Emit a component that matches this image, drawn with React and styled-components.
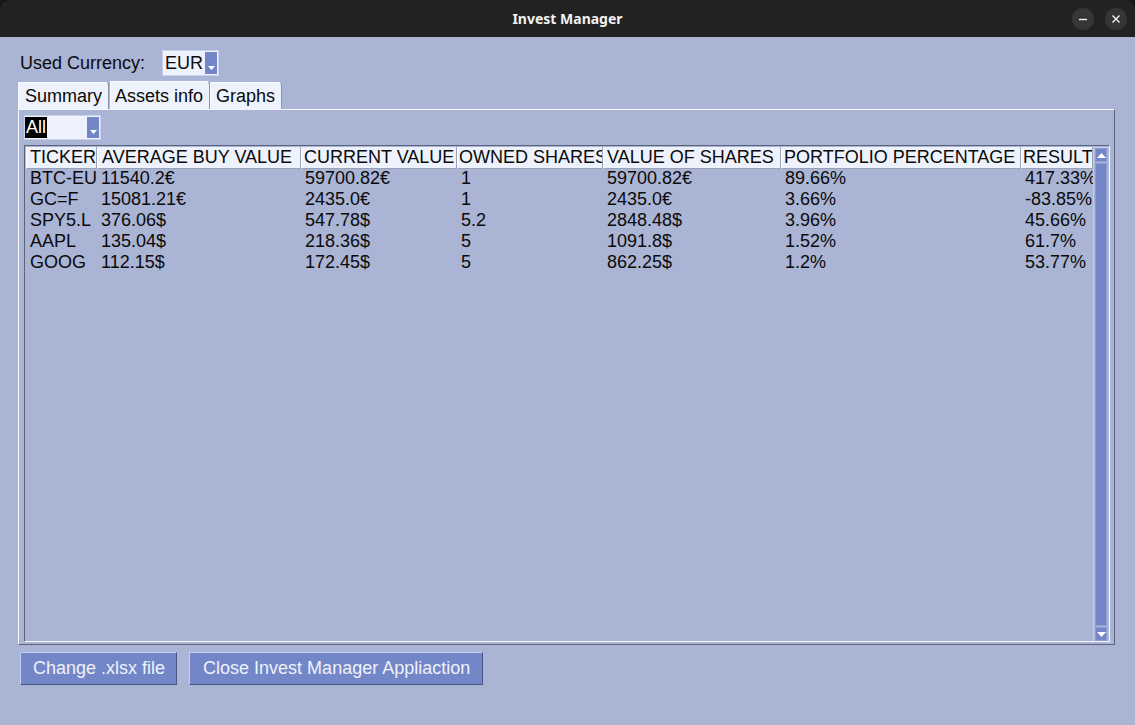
import styled, { createGlobalStyle } from 'styled-components';

const GlobalStyle = createGlobalStyle`
  html, body {
    margin: 0;
    padding: 0;
    background: #161616;
  }
  * {
    box-sizing: border-box;
  }
`;

const colors = {
  bg: '#aab4d4',
  light: '#eef2fc',
  accent: '#7386c7',
  dark: '#5b6478',
  text: '#0a0a0a',
};

const Window = styled.div`
  width: 1135px;
  height: 725px;
  display: flex;
  flex-direction: column;
  font-family: 'Liberation Sans', Arial, sans-serif;
  font-size: 18px;
  color: ${colors.text};
`;

const TitleBar = styled.div`
  height: 37px;
  background: #222222;
  border-radius: 10px 10px 0 0;
  display: grid;
  grid-template-columns: 1fr auto 1fr;
  align-items: center;
`;

const Title = styled.div`
  grid-column: 2;
  color: #f2f2f2;
  font-family: 'Noto Sans', 'DejaVu Sans', sans-serif;
  font-weight: 700;
  font-size: 14px;
`;

const Controls = styled.div`
  grid-column: 3;
  justify-self: end;
  display: flex;
  gap: 11px;
  margin-right: 8px;
`;

const CircleButton = styled.div`
  width: 22px;
  height: 22px;
  border-radius: 50%;
  background: #363636;
  display: flex;
  align-items: center;
  justify-content: center;
`;

const Body = styled.div`
  flex: 1;
  background: ${colors.bg};
  padding: 13px 21px 0 18px;
  display: flex;
  flex-direction: column;
`;

const CurrencyRow = styled.div`
  display: flex;
  align-items: center;
  gap: 17px;
  margin-left: 2px;
  height: 26px;
`;

const Combo = styled.div`
  width: ${({ width }) => width}px;
  height: ${({ height }) => height}px;
  background: ${colors.light};
  border: 1px solid #c9d0ea;
  display: flex;
  align-items: center;
  justify-content: space-between;
  padding: 1px 1px 1px ${({ pad }) => pad}px;
`;

const ComboText = styled.span`
  line-height: 21px;
  height: 21px;
  padding: 0 ${({ selected }) => (selected ? '1px' : '0')};
  background: ${({ selected }) => (selected ? '#000' : 'transparent')};
  color: ${({ selected }) => (selected ? '#fff' : colors.text)};
`;

const ArrowButton = styled.div`
  width: 12px;
  height: 100%;
  background: ${colors.accent};
  display: flex;
  align-items: flex-end;
  justify-content: center;
  padding-bottom: 4px;
`;

const TabRow = styled.div`
  display: flex;
  margin-top: 5px;
  height: 28px;
  align-items: flex-end;
`;

const Tab = styled.div`
  height: ${({ active }) => (active ? 28 : 27)}px;
  padding: 0 6px 0 ${({ pad }) => pad}px;
  margin-right: ${({ gap }) => gap}px;
  background: ${colors.light};
  border-top: 1px solid #f8faff;
  border-left: 1px solid #f8faff;
  border-right: 1px solid #8d94a8;
  border-radius: 0 4px 0 0;
  display: flex;
  align-items: center;
  line-height: 1;
`;

const Pane = styled.div`
  width: 1097px;
  height: 536px;
  border-top: 1px solid #f4f7ff;
  border-left: 1px solid #f4f7ff;
  border-bottom: 1px solid ${colors.dark};
  border-right: 1px solid ${colors.dark};
  padding: 5px 4px 2px 5px;
  display: flex;
  flex-direction: column;
  gap: 5px;
`;

const Tree = styled.div`
  flex: 1;
  display: flex;
  border-top: 1px solid ${colors.dark};
  border-left: 1px solid ${colors.dark};
  border-bottom: 1px solid #f4f7ff;
  border-right: 1px solid #f4f7ff;
  padding: 1px 0 0 1px;
`;

const Table = styled.div`
  display: grid;
  grid-template-columns: ${({ cols }) => cols.map(c => `${c}px`).join(' ')};
  grid-auto-rows: 21px;
  align-content: start;
`;

const HeadCell = styled.div`
  height: 22px;
  background: ${colors.light};
  border-left: 1px solid #ffffff;
  border-right: 1px solid #9ba1b4;
  border-bottom: 1px solid #9ba1b4;
  padding-left: ${({ pad }) => pad}px;
  line-height: 21px;
  white-space: nowrap;
  overflow: hidden;
`;

const Cell = styled.div`
  padding-left: 4px;
  line-height: 21px;
  white-space: nowrap;
  overflow: hidden;
`;

const Scrollbar = styled.div`
  width: 15px;
  border-left: 1px solid #c6cdea;
  border-top: 1px solid #c6cdea;
  display: flex;
  flex-direction: column;
  padding: 0 1px 0 1px;
  gap: 1px;
`;

const ScrollArrow = styled.div`
  height: 14px;
  background: ${colors.accent};
  border: 1px solid #8e9cd2;
  display: flex;
  align-items: center;
  justify-content: center;
`;

const Thumb = styled.div`
  flex: 1;
  background: ${colors.accent};
  border: 1px solid #8e9cd2;
`;

const ButtonRow = styled.div`
  display: flex;
  gap: 12px;
  margin-top: 7px;
  margin-left: 2px;
`;

const Button = styled.div`
  height: 33px;
  padding: 0 ${({ padR }) => padR}px 0 ${({ padL }) => padL}px;
  background: ${colors.accent};
  color: ${colors.light};
  border-top: 1px solid #c3cdf6;
  border-left: 1px solid #c3cdf6;
  border-bottom: 1px solid #48557f;
  border-right: 1px solid #48557f;
  display: flex;
  align-items: center;
`;

const Triangle = ({ up }) => (
  <svg width="9" height="5" viewBox="0 0 9 5">
    <path d={up ? 'M0 5 L4.5 0 L9 5 Z' : 'M0 0 L4.5 5 L9 0 Z'} fill="#ffffff" />
  </svg>
);

const SmallDown = () => (
  <svg width="7" height="4" viewBox="0 0 7 4">
    <path d="M0 0 L3.5 4 L7 0 Z" fill="#ffffff" />
  </svg>
);

const columns = [
  { title: 'TICKER', width: 71, pad: 3 },
  { title: 'AVERAGE BUY VALUE', width: 204, pad: 4 },
  { title: 'CURRENT VALUE', width: 156, pad: 2 },
  { title: 'OWNED SHARES', width: 146, pad: 1 },
  { title: 'VALUE OF SHARES', width: 178, pad: 3 },
  { title: 'PORTFOLIO PERCENTAGE', width: 240, pad: 2 },
  { title: 'RESULT', width: 72, pad: 1 },
];

const rows = [
  ['BTC-EUR', '11540.2€', '59700.82€', '1', '59700.82€', '89.66%', '417.33%'],
  ['GC=F', '15081.21€', '2435.0€', '1', '2435.0€', '3.66%', '-83.85%'],
  ['SPY5.L', '376.06$', '547.78$', '5.2', '2848.48$', '3.96%', '45.66%'],
  ['AAPL', '135.04$', '218.36$', '5', '1091.8$', '1.52%', '61.7%'],
  ['GOOG', '112.15$', '172.45$', '5', '862.25$', '1.2%', '53.77%'],
];

const App = () => {
  return (
    <>
      <GlobalStyle />
      <Window>
        <TitleBar>
          <Title>Invest Manager</Title>
          <Controls>
            <CircleButton>
              <svg width="10" height="10" viewBox="0 0 10 10">
                <path d="M1 5.5 H9" stroke="#f2f2f2" strokeWidth="1.4" />
              </svg>
            </CircleButton>
            <CircleButton>
              <svg width="10" height="10" viewBox="0 0 10 10">
                <path d="M1.5 1.5 L8.5 8.5 M8.5 1.5 L1.5 8.5" stroke="#f2f2f2" strokeWidth="1.4" />
              </svg>
            </CircleButton>
          </Controls>
        </TitleBar>

        <Body>
          <CurrencyRow>
            <span>Used Currency:</span>
            <Combo width={57} height={26} pad={2}>
              <ComboText>EUR</ComboText>
              <ArrowButton>
                <SmallDown />
              </ArrowButton>
            </Combo>
          </CurrencyRow>

          <TabRow>
            <Tab pad={6} gap={1}>Summary</Tab>
            <Tab pad={4} gap={0} active>Assets info</Tab>
            <Tab pad={5} gap={0}>Graphs</Tab>
          </TabRow>

          <Pane>
            <Combo width={77} height={25} pad={0}>
              <ComboText selected>All</ComboText>
              <ArrowButton>
                <SmallDown />
              </ArrowButton>
            </Combo>

            <Tree>
              <Table cols={columns.map(c => c.width)}>
                {columns.map(c => (
                  <HeadCell key={c.title} pad={c.pad}>{c.title}</HeadCell>
                ))}
                {rows.map(r => r.map((v, i) => <Cell key={r[0] + i}>{v}</Cell>))}
              </Table>
              <Scrollbar>
                <ScrollArrow>
                  <Triangle up />
                </ScrollArrow>
                <Thumb />
                <ScrollArrow>
                  <Triangle />
                </ScrollArrow>
              </Scrollbar>
            </Tree>
          </Pane>

          <ButtonRow>
            <Button padL={12} padR={11}>Change .xlsx file</Button>
            <Button padL={13} padR={12}>Close Invest Manager Appliaction</Button>
          </ButtonRow>
        </Body>
      </Window>
    </>
  );
};

export default App;
